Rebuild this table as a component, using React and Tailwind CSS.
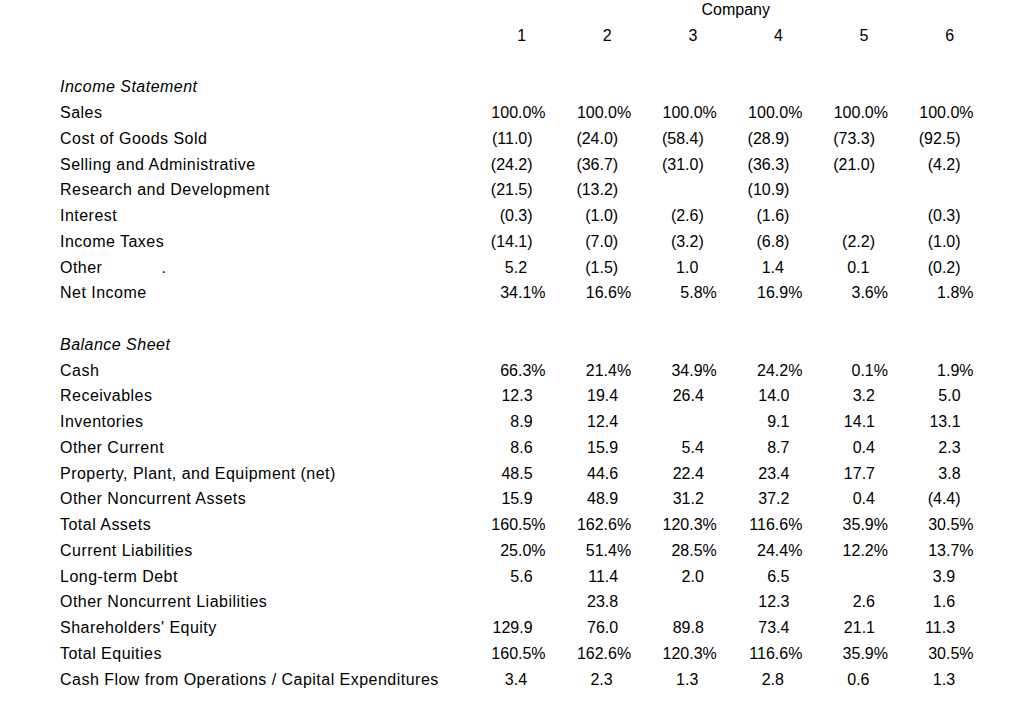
import React from "react";

const IS = [
  ["Sales", ["100.0%", "100.0%", "100.0%", "100.0%", "100.0%", "100.0%"]],
  ["Cost of Goods Sold", ["(11.0)", "(24.0)", "(58.4)", "(28.9)", "(73.3)", "(92.5)"]],
  ["Selling and Administrative", ["(24.2)", "(36.7)", "(31.0)", "(36.3)", "(21.0)", "(4.2)"]],
  ["Research and Development", ["(21.5)", "(13.2)", "", "(10.9)", "", ""]],
  ["Interest", ["(0.3)", "(1.0)", "(2.6)", "(1.6)", "", "(0.3)"]],
  ["Income Taxes", ["(14.1)", "(7.0)", "(3.2)", "(6.8)", "(2.2)", "(1.0)"]],
  ["Other", ["5.2_", "(1.5)", "1.0_", "1.4_", "0.1_", "(0.2)"]],
  ["Net Income", ["34.1%", "16.6%", "5.8%", "16.9%", "3.6%", "1.8%"]],
];

const BS = [
  ["Cash", ["66.3%", "21.4%", "34.9%", "24.2%", "0.1%", "1.9%"]],
  ["Receivables", ["12.3", "19.4", "26.4", "14.0", "3.2", "5.0"]],
  ["Inventories", ["8.9", "12.4", "", "9.1", "14.1", "13.1"]],
  ["Other Current", ["8.6", "15.9", "5.4", "8.7", "0.4", "2.3"]],
  ["Property, Plant, and Equipment (net)", ["48.5", "44.6", "22.4", "23.4", "17.7", "3.8"]],
  ["Other Noncurrent Assets", ["15.9", "48.9", "31.2", "37.2", "0.4", "(4.4)"]],
  ["Total Assets", ["160.5%", "162.6%", "120.3%", "116.6%", "35.9%", "30.5%"]],
  ["Current Liabilities", ["25.0%", "51.4%", "28.5%", "24.4%", "12.2%", "13.7%"]],
  ["Long-term Debt", ["5.6", "11.4", "2.0", "6.5", "", "3.9_"]],
  ["Other Noncurrent Liabilities", ["", "23.8", "", "12.3", "2.6", "1.6_"]],
  ["Shareholders' Equity", ["129.9", "76.0", "89.8", "73.4", "21.1", "11.3_"]],
  ["Total Equities", ["160.5%", "162.6%", "120.3%", "116.6%", "35.9%", "30.5%"]],
  ["Cash Flow from Operations / Capital Expenditures", ["3.4_", "2.3_", "1.3_", "2.8_", "0.6_", "1.3_"]],
];

function Cell({ v }) {
  let text = v;
  let pad = "pr-[13px]";
  if (v.endsWith("%")) pad = "pr-0";
  else if (v.endsWith("_")) {
    text = v.slice(0, -1);
    pad = "pr-[18.5px]";
  }
  return <div className={`w-[85.6px] shrink-0 text-right ${pad}`}>{text}</div>;
}

function Row({ label, values, italic, children }) {
  return (
    <div className="flex h-[25.75px] leading-[25.75px] whitespace-nowrap">
      <div className={`w-[460px] shrink-0 pl-[60px] tracking-[0.48px] ${italic ? "italic" : ""}`}>
        {label}
        {children}
      </div>
      {values && values.map((v, i) => <Cell key={i} v={v} />)}
    </div>
  );
}

function Blank() {
  return <div className="h-[25.75px]" />;
}

export default function App() {
  return (
    <div className="min-h-[719px] w-[1024px] bg-white text-black text-[16px] font-['Liberation_Sans',Arial,sans-serif] overflow-hidden">
      <div className="mt-[-3px]">
        <div className="flex h-[25.75px] leading-[25.75px] whitespace-nowrap">
          <div className="w-[631.2px] shrink-0" />
          <div className="w-[171.2px] shrink-0 pl-[38px] text-center">Company</div>
        </div>
        <div className="flex h-[25.75px] leading-[25.75px]">
          <div className="w-[460px] shrink-0" />
          {[1, 2, 3, 4, 5, 6].map((n) => (
            <div key={n} className="w-[85.6px] shrink-0 text-right pr-[19.5px]">
              {n}
            </div>
          ))}
        </div>
        <Blank />
        <Row label="Income Statement" italic />
        {IS.map(([l, v]) =>
          l === "Other" ? (
            <Row key={l} label={l} values={v}>
              <span className="ml-[59px]">.</span>
            </Row>
          ) : (
            <Row key={l} label={l} values={v} />
          )
        )}
        <Blank />
        <Row label="Balance Sheet" italic />
        {BS.map(([l, v]) => (
          <Row key={l} label={l} values={v} />
        ))}
      </div>
    </div>
  );
}
